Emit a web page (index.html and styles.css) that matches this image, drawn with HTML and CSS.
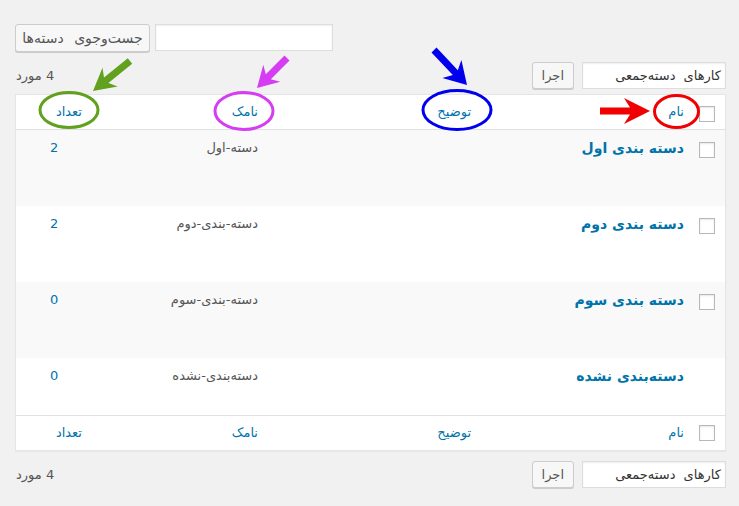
FILE: index.html
```html
<!DOCTYPE html>
<html lang="fa" dir="rtl">
<head>
  <meta charset="UTF-8">
  <meta name="viewport" content="width=device-width, initial-scale=1.0">
  <title>دسته‌ها</title>
  <link rel="stylesheet" href="styles.css">
</head>
<body>
  <div class="wrap">
    <!-- جست‌وجو -->
    <form class="search-box">
      <input type="search" class="search-input" value="">
      <button type="button" class="button search-btn">جست‌وجوی دسته‌ها</button>
    </form>

    <div class="tablenav top">
      <div class="bulk-actions">
        <div class="bulk-select">کارهای دسته‌جمعی</div>
        <button type="button" class="button">اجرا</button>
      </div>
      <span class="num-items">4 مورد</span>
    </div>

    <table class="cat-table">
      <colgroup>
        <col class="col-check">
        <col class="col-name">
        <col class="col-desc">
        <col class="col-slug">
        <col class="col-count">
      </colgroup>
      <thead>
        <tr>
          <td class="check-column"><span class="checkbox"></span></td>
          <th><a href="#">نام</a></th>
          <th><a href="#">توضیح</a></th>
          <th><a href="#">نامک</a></th>
          <th><a href="#">تعداد</a></th>
        </tr>
      </thead>
      <tbody>
        <tr class="row alt">
          <th class="check-column"><span class="checkbox"></span></th>
          <td><a href="#" class="row-title">دسته بندی اول</a></td>
          <td></td>
          <td class="slug">دسته-اول</td>
          <td class="num"><a href="#">2</a></td>
        </tr>
        <tr class="row">
          <th class="check-column"><span class="checkbox"></span></th>
          <td><a href="#" class="row-title">دسته بندی دوم</a></td>
          <td></td>
          <td class="slug">دسته-بندی-دوم</td>
          <td class="num"><a href="#">2</a></td>
        </tr>
        <tr class="row alt">
          <th class="check-column"><span class="checkbox"></span></th>
          <td><a href="#" class="row-title">دسته بندی سوم</a></td>
          <td></td>
          <td class="slug">دسته-بندی-سوم</td>
          <td class="num"><a href="#">0</a></td>
        </tr>
        <tr class="row short">
          <th class="check-column"></th>
          <td><a href="#" class="row-title">دسته‌بندی نشده</a></td>
          <td></td>
          <td class="slug">دسته‌بندی-نشده</td>
          <td class="num"><a href="#">0</a></td>
        </tr>
      </tbody>
      <tfoot>
        <tr>
          <td class="check-column"><span class="checkbox"></span></td>
          <th><a href="#">نام</a></th>
          <th><a href="#">توضیح</a></th>
          <th><a href="#">نامک</a></th>
          <th><a href="#">تعداد</a></th>
        </tr>
      </tfoot>
    </table>

    <div class="tablenav bottom">
      <div class="bulk-actions">
        <div class="bulk-select">کارهای دسته‌جمعی</div>
        <button type="button" class="button">اجرا</button>
      </div>
      <span class="num-items">4 مورد</span>
    </div>
  </div>

  <!-- علامت‌گذاری ستون‌ها -->
  <svg class="marks" width="739" height="506" viewBox="0 0 739 506">
    <g fill="none" stroke-width="3">
      <ellipse cx="69" cy="110" rx="29" ry="17.5" stroke="#62a11f"/>
      <ellipse cx="244" cy="111" rx="29" ry="18.5" stroke="#d63cf2"/>
      <ellipse cx="457" cy="110" rx="34" ry="19.5" stroke="#0000ee"/>
      <ellipse cx="676.5" cy="111.5" rx="22" ry="16" stroke="#f00000"/>
    </g>
    <polygon fill="#62a11f" points="127.8,58.3 104,77.6 102.5,67.8 93,91 117.7,86.4 108.4,83 132.2,63.7"/>
    <polygon fill="#d63cf2" points="284.5,55.5 265.8,74.2 263.3,64.7 257,88 280.3,81.7 270.8,79.2 289.5,60.5"/>
    <polygon fill="#0000ee" points="436.5,47.6 457.8,70.2 461.4,60.1 467,85 442.4,77.9 452.8,75 431.5,52.4"/>
    <polygon fill="#f00000" points="600,107.5 630,107.5 624,98 650,111 624,124 630,114.5 600,114.5"/>
  </svg>
</body>
</html>
```

FILE: styles.css
```css
body {
  margin: 0;
  background: #f1f1f1;
  color: #444;
  font-family: Tahoma, "DejaVu Sans", sans-serif;
  font-size: 13px;
  position: relative;
  min-height: 506px;
}

.wrap {
  padding: 24px 13px 0 15px;
}

a {
  color: #0073aa;
  text-decoration: none;
}

/* دکمه‌ها و فیلدها */
.button {
  height: 27px;
  padding: 0 9px;
  background: #f7f7f7;
  border: 1px solid #cccccc;
  border-radius: 3px;
  box-shadow: 0 1px 0 #cccccc;
  color: #555;
  font-family: inherit;
  font-size: 13px;
  cursor: pointer;
}

.search-box {
  display: flex;
  justify-content: flex-end;
  gap: 5px;
  margin: 0;
}

.search-input {
  width: 178px;
  height: 27px;
  box-sizing: border-box;
  border: 1px solid #dddddd;
  background: #fff;
  box-shadow: inset 0 1px 2px rgba(0, 0, 0, 0.07);
  margin: 0;
}

.search-btn {
  width: 135px;
  height: 28px;
  padding: 0;
  font-size: 14px;
  word-spacing: 6px;
  text-align: center;
}

.tablenav {
  display: flex;
  justify-content: space-between;
  align-items: center;
}

.tablenav.top {
  margin: 10px 0 5px;
}

.tablenav.bottom {
  margin-top: 10px;
}

.bulk-actions {
  display: flex;
  gap: 8px;
}

.bulk-select {
  width: 144px;
  height: 27px;
  box-sizing: border-box;
  padding: 0 4px;
  border: 1px solid #dddddd;
  background: #fff;
  box-shadow: inset 0 1px 2px rgba(0, 0, 0, 0.07);
  color: #333;
  line-height: 25px;
  text-align: right;
  word-spacing: 4px;
  white-space: nowrap;
}

.num-items {
  color: #555;
  padding-left: 1px;
}

/* جدول دسته‌ها */
.cat-table {
  width: 100%;
  table-layout: fixed;
  border-collapse: separate;
  border-spacing: 0;
  background: #fff;
  border: 1px solid #e5e5e5;
  box-shadow: 0 1px 1px rgba(0, 0, 0, 0.04);
}

.col-check { width: 31px; }
.col-name { width: 213px; }
.col-desc { width: 213px; }
.col-slug { width: 176px; }
.col-count { width: 76px; }

.cat-table th,
.cat-table td {
  padding: 8px 10px;
  text-align: right;
  vertical-align: top;
  font-weight: 400;
  line-height: 18px;
}

.cat-table thead th,
.cat-table thead td {
  border-bottom: 1px solid #e1e1e1;
  height: 18px;
}

.cat-table tfoot th,
.cat-table tfoot td {
  border-top: 1px solid #e1e1e1;
  height: 18px;
}

.cat-table .check-column {
  padding: 11px 10px 0 0;
}

.cat-table tfoot .check-column {
  padding-top: 9px;
}

.cat-table tbody .check-column {
  padding-top: 12px;
}

.checkbox {
  display: block;
  width: 16px;
  height: 16px;
  box-sizing: border-box;
  border: 1px solid #b4b9be;
  background: #fff;
  box-shadow: inset 0 1px 2px rgba(0, 0, 0, 0.1);
}

.row {
  height: 76px;
}

.row.short {
  height: 57px;
}

.row.alt {
  background: #f9f9f9;
}

.row td {
  line-height: 20px;
}

.row-title {
  font-size: 14px;
  font-weight: 700;
}

.slug {
  color: #555;
}

.cat-table td.num {
  text-align: left;
  padding-left: 34px;
}

/* لایهٔ علامت‌ها */
.marks {
  position: absolute;
  top: 0;
  left: 0;
  pointer-events: none;
}
```
